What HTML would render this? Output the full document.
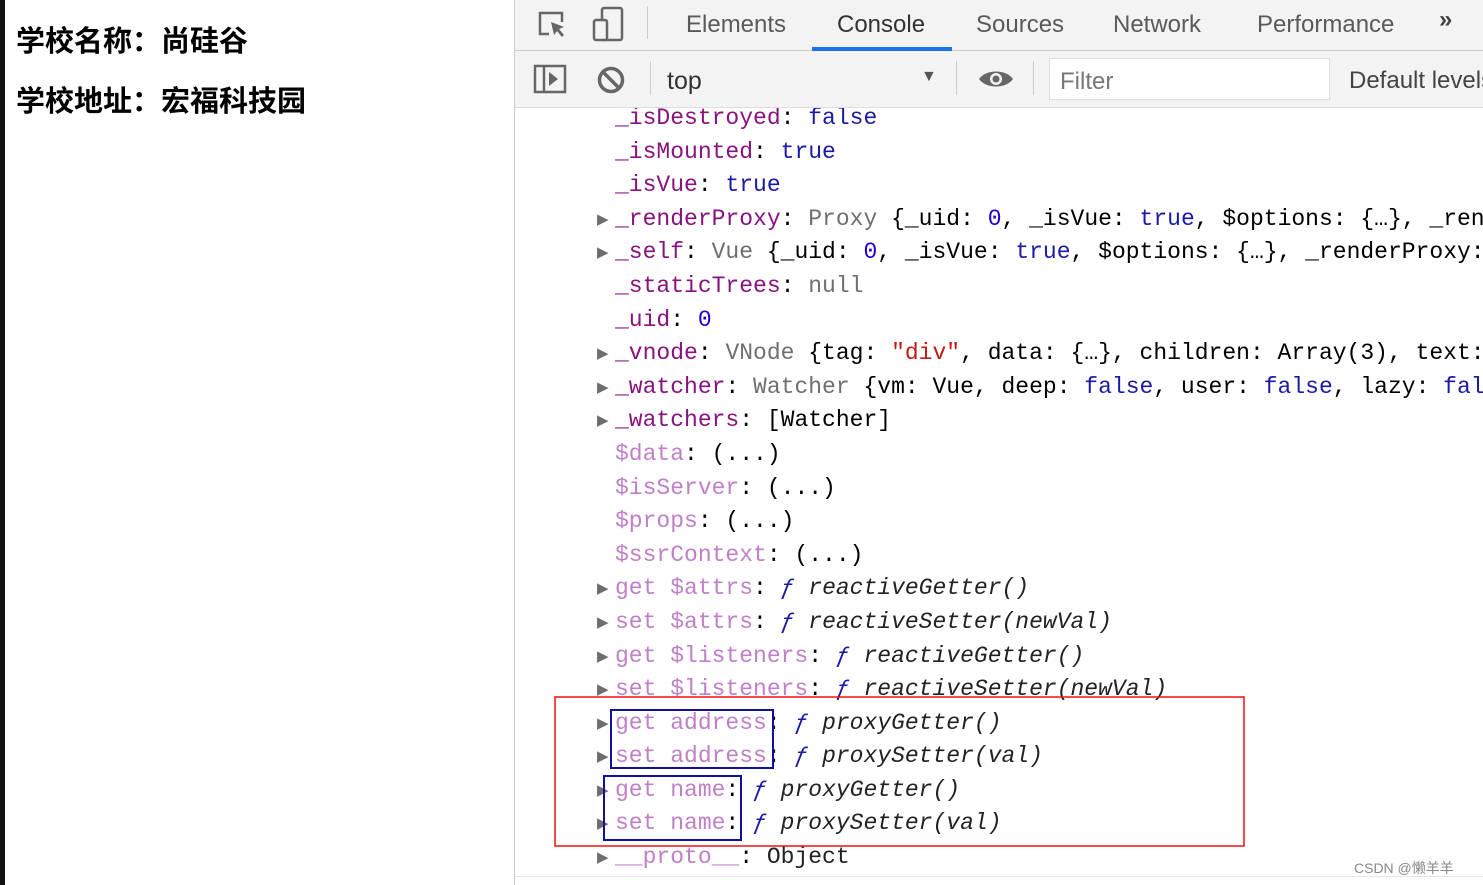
<!DOCTYPE html>
<html><head><meta charset="utf-8"><style>
*{margin:0;padding:0;box-sizing:border-box}
body{width:1483px;height:885px;overflow:hidden;background:#fff;position:relative;font-family:"Liberation Sans",sans-serif}
.left{position:absolute;left:0;top:0;width:514px;height:885px;background:#fff;border-left:5px solid #111}
.left div{position:absolute;left:11px;font:bold 29px "Liberation Sans","Noto Sans CJK SC",sans-serif;color:#000;white-space:nowrap}
.dt{position:absolute;left:514px;top:0;width:969px;height:885px;border-left:1px solid #ccc;background:#fff;overflow:hidden}
.tb1{position:absolute;left:0;top:0;width:969px;height:51px;background:#f3f3f3;border-bottom:1px solid #ccc}
.tb2{position:absolute;left:0;top:51px;width:969px;height:57px;background:#f3f3f3;border-bottom:1px solid #ddd}
.tab{position:absolute;top:11px;font-size:24px;color:#5a5a5a}
.sep{position:absolute;width:1px;background:#ccc}
.con{position:absolute;left:0;top:108px;width:969px;height:777px;overflow:hidden}
.lines{position:absolute;left:0;top:-6px;font:23px/33.6px "Liberation Mono",monospace;white-space:nowrap}
.l{height:33.6px;position:relative;padding-left:100px;white-space:pre}
.a{position:absolute;left:82px;top:0;font-size:15px;color:#6e6e6e;font-family:"DejaVu Sans",sans-serif}
.k{color:#881280}.n{color:#c080c8}.b{color:#1a1aa6}.num{color:#1c00cf}.s{color:#c41a16}.g{color:#6f6f6f}.d{color:#222}
.f{color:#1a1aa6;font-style:italic}.i{font-style:italic;color:#222}
</style></head><body>
<div class="left">
<div style="top:18px">学校名称：尚硅谷</div>
<div style="top:78px">学校地址：宏福科技园</div>
</div>
<div class="dt">
<div class="tb1">
<svg style="position:absolute;left:22px;top:9px" width="32" height="32" viewBox="0 0 32 32"><path d="M12 25H3V4h22v9" fill="none" stroke="#666" stroke-width="2.5"/><path d="M14 13l13 5-5 2 5 6-2 2-5-6-3 4z" fill="#666"/></svg>
<svg style="position:absolute;left:77px;top:6px" width="34" height="36" viewBox="0 0 34 36"><rect x="10" y="2" width="20" height="32" rx="2" fill="none" stroke="#666" stroke-width="2.5"/><rect x="2" y="14" width="13" height="20" rx="2" fill="#f3f3f3" stroke="#666" stroke-width="2.5"/></svg>
<div class="sep" style="left:132px;top:6px;height:33px"></div>
<div class="tab" style="left:171px">Elements</div>
<div class="tab" style="left:322px;color:#333">Console</div>
<div style="position:absolute;left:297px;top:47px;width:140px;height:4px;background:#1a73e8"></div>
<div class="tab" style="left:461px">Sources</div>
<div class="tab" style="left:598px">Network</div>
<div class="tab" style="left:742px">Performance</div>
<div class="tab" style="left:924px;top:6px;font-weight:bold;color:#444">»</div>
</div>
<div class="tb2">
<svg style="position:absolute;left:18px;top:13px" width="34" height="30" viewBox="0 0 34 30"><rect x="2" y="2" width="30" height="26" fill="none" stroke="#666" stroke-width="2.5"/><line x1="11" y1="2" x2="11" y2="28" stroke="#666" stroke-width="2.5"/><path d="M16 8l9 7-9 7z" fill="#666"/></svg>
<svg style="position:absolute;left:81px;top:14px" width="30" height="30" viewBox="0 0 30 30"><circle cx="15" cy="15" r="11.5" fill="none" stroke="#666" stroke-width="3.5"/><line x1="7" y1="7" x2="23" y2="23" stroke="#666" stroke-width="3.5"/></svg>
<div class="sep" style="left:135px;top:10px;height:34px"></div>
<div style="position:absolute;left:152px;top:16px;font-size:25px;color:#333">top</div>
<div style="position:absolute;left:406px;top:17px;font-size:16px;color:#555">▼</div>
<div class="sep" style="left:441px;top:10px;height:34px"></div>
<svg style="position:absolute;left:463px;top:17px" width="36" height="22" viewBox="0 0 36 22"><path d="M1 11C8 1 28 1 35 11C28 21 8 21 1 11z" fill="#666"/><circle cx="18" cy="11" r="6" fill="#f3f3f3"/><circle cx="18" cy="11" r="3.5" fill="#666"/></svg>
<div class="sep" style="left:518px;top:10px;height:34px"></div>
<div style="position:absolute;left:534px;top:7px;width:281px;height:42px;background:#fff;border:1px solid #ddd;font-size:24px;color:#777;padding:9px 10px">Filter</div>
<div style="position:absolute;left:834px;top:16px;font-size:24px;color:#444;white-space:nowrap">Default levels</div>
</div>
<div class="con"><div class="lines"><div class="l"><span class="k">_isDestroyed</span>: <span class="b">false</span></div><div class="l"><span class="k">_isMounted</span>: <span class="b">true</span></div><div class="l"><span class="k">_isVue</span>: <span class="b">true</span></div><div class="l"><span class="a">▶</span><span class="k">_renderProxy</span>: <span class="g">Proxy</span> {_uid: <span class="num">0</span>, _isVue: <span class="b">true</span>, $options: {…}, _renderProxy</div><div class="l"><span class="a">▶</span><span class="k">_self</span>: <span class="g">Vue</span> {_uid: <span class="num">0</span>, _isVue: <span class="b">true</span>, $options: {…}, _renderProxy: </div><div class="l"><span class="k">_staticTrees</span>: <span class="g">null</span></div><div class="l"><span class="k">_uid</span>: <span class="num">0</span></div><div class="l"><span class="a">▶</span><span class="k">_vnode</span>: <span class="g">VNode</span> {tag: <span class="s">"div"</span>, data: {…}, children: Array(3), text: </div><div class="l"><span class="a">▶</span><span class="k">_watcher</span>: <span class="g">Watcher</span> {vm: Vue, deep: <span class="b">false</span>, user: <span class="b">false</span>, lazy: <span class="b">false</span></div><div class="l"><span class="a">▶</span><span class="k">_watchers</span>: [Watcher]</div><div class="l"><span class="n">$data</span>: (...)</div><div class="l"><span class="n">$isServer</span>: (...)</div><div class="l"><span class="n">$props</span>: (...)</div><div class="l"><span class="n">$ssrContext</span>: (...)</div><div class="l"><span class="a">▶</span><span class="n">get $attrs</span>: <span class="f">ƒ</span> <span class="i">reactiveGetter()</span></div><div class="l"><span class="a">▶</span><span class="n">set $attrs</span>: <span class="f">ƒ</span> <span class="i">reactiveSetter(newVal)</span></div><div class="l"><span class="a">▶</span><span class="n">get $listeners</span>: <span class="f">ƒ</span> <span class="i">reactiveGetter()</span></div><div class="l"><span class="a">▶</span><span class="n">set $listeners</span>: <span class="f">ƒ</span> <span class="i">reactiveSetter(newVal)</span></div><div class="l"><span class="a">▶</span><span class="n">get address</span>: <span class="f">ƒ</span> <span class="i">proxyGetter()</span></div><div class="l"><span class="a">▶</span><span class="n">set address</span>: <span class="f">ƒ</span> <span class="i">proxySetter(val)</span></div><div class="l"><span class="a">▶</span><span class="n">get name</span>: <span class="f">ƒ</span> <span class="i">proxyGetter()</span></div><div class="l"><span class="a">▶</span><span class="n">set name</span>: <span class="f">ƒ</span> <span class="i">proxySetter(val)</span></div><div class="l"><span class="a">▶</span><span class="n">__proto__</span>: <span class="d">Object</span></div></div>
<div style="position:absolute;left:0;top:768px;width:969px;height:1px;background:#e6e6e6"></div>
</div>
</div>
<svg style="position:absolute;left:554px;top:696px" width="692" height="152"><rect x="1" y="1" width="689" height="149" fill="none" stroke="#ee1111" stroke-width="1.5"/></svg>
<div style="position:absolute;left:610px;top:709px;width:164px;height:60px;border:2px solid #1010a0"></div>
<div style="position:absolute;left:603px;top:775px;width:139px;height:66px;border:2px solid #1010a0"></div>
<div style="position:absolute;left:1354px;top:858px;font:14px 'Liberation Sans','Noto Sans CJK SC',sans-serif;color:#888">CSDN @懒羊羊</div>
</body></html>
